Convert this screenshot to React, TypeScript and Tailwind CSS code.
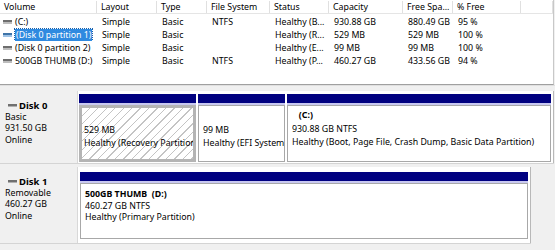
import React from "react";

const cols = [
  { name: "Volume", w: 97 },
  { name: "Layout", w: 60 },
  { name: "Type", w: 50 },
  { name: "File System", w: 63 },
  { name: "Status", w: 59 },
  { name: "Capacity", w: 74 },
  { name: "Free Spa...", w: 50 },
  { name: "% Free", w: 68 },
  { name: "", w: 32 },
];

const rows = [
  ["(C:)", "Simple", "Basic", "NTFS", "Healthy (B...", "930.88 GB", "880.49 GB", "95 %"],
  ["(Disk 0 partition 1)", "Simple", "Basic", "", "Healthy (R...", "529 MB", "529 MB", "100 %"],
  ["(Disk 0 partition 2)", "Simple", "Basic", "", "Healthy (E...", "99 MB", "99 MB", "100 %"],
  ["500GB THUMB (D:)", "Simple", "Basic", "NTFS", "Healthy (P...", "460.27 GB", "433.56 GB", "94 %"],
];

function DriveIcon({ selected }: { selected?: boolean }) {
  return (
    <span className="inline-flex flex-col w-[9px] h-[4px] mr-[3px] shrink-0">
      <span className={"block h-[2px] " + (selected ? "bg-[#3f74a8]" : "bg-[#6e6e6e]")} />
      <span className={"block h-[2px] " + (selected ? "bg-[#9fc3e6]" : "bg-[#bdbdbd]")} />
    </span>
  );
}

function Partition({
  w,
  hatched,
  lines,
  bold,
  body,
  boldLead,
}: {
  w: string;
  hatched?: boolean;
  lines: string[];
  bold?: string;
  body: string;
  boldLead: string;
}) {
  return (
    <div className={"flex flex-col min-w-0 " + w}>
      <div className="h-[9px] bg-[#000080] shrink-0" />
      <div className="h-[2px] bg-[#c8c8f0] shrink-0" />
      <div
        className={
          "flex-1 flex flex-col overflow-hidden " +
          body +
          " " +
          (hatched
            ? "border-[3px] border-[#b4b4b4] pl-[2px] bg-[repeating-linear-gradient(135deg,#ffffff_0px,#ffffff_5px,#c4c4c4_5px,#c4c4c4_6px)]"
            : "border border-[#a8a8a8] pl-[4px] bg-white")
        }
      >
        <div className={"font-bold whitespace-pre " + boldLead}>{bold ?? " "}</div>
        {lines.map((l, i) => (
          <div key={i} className="whitespace-nowrap overflow-hidden">
            {l}
          </div>
        ))}
      </div>
    </div>
  );
}

function DiskLabel({ name, lines, pt }: { name: string; lines: string[]; pt: string }) {
  return (
    <div className={"w-[78px] shrink-0 bg-[#f0f0f0] border-r border-[#d8d8d8] pl-[5px] leading-[11.7px] " + pt}>
      <div className="flex items-center font-bold text-[9.5px]">
        <span className="inline-flex flex-col w-[9px] h-[3px] mr-[2px] ml-[3px]">
          <span className="block h-[2px] bg-[#707070]" />
          <span className="block h-[1px] bg-[#b0b0b0]" />
        </span>
        {name}
      </div>
      {lines.map((l, i) => (
        <div key={i}>{l}</div>
      ))}
    </div>
  );
}

export default function App() {
  return (
    <div
      className="w-[555px] h-[250px] overflow-hidden bg-[#f0f0f0] text-black text-[8.8px] flex flex-col"
      style={{ fontFamily: "'Noto Sans', 'Open Sans', sans-serif" }}
    >
      {/* Volume list */}
      <div className="h-[85px] shrink-0 bg-white border-b border-[#a0a0a0] border-r border-r-[#c8c8c8] w-[554px]">
        <div className="flex h-[14px] border-b border-[#e5e5e5] leading-[13px] pt-[1px]">
          {cols.map((c, i) => (
            <div
              key={i}
              style={{ width: c.w }}
              className="shrink-0 border-r border-[#e0e0e0] pl-[4px] whitespace-nowrap overflow-hidden"
            >
              {c.name}
            </div>
          ))}
        </div>
        <div className="pt-[1px]">
          {rows.map((r, ri) => (
            <div key={ri} className="flex h-[13px] leading-[12px]">
              {r.map((cell, ci) => (
                <div
                  key={ci}
                  style={{ width: cols[ci].w }}
                  className={
                    "shrink-0 whitespace-nowrap overflow-hidden " +
                    (ci === 0 ? "pl-[3px] flex items-center" : "pl-[5px] pt-[1px]")
                  }
                >
                  {ci === 0 ? (
                    <>
                      <DriveIcon selected={ri === 1} />
                      <span
                        className={
                          ri === 1
                            ? "bg-[#2f8ae0] text-white px-[1px] outline outline-1 outline-dotted outline-[#1a5fa8]"
                            : ""
                        }
                      >
                        {cell}
                      </span>
                    </>
                  ) : (
                    cell
                  )}
                </div>
              ))}
            </div>
          ))}
        </div>
      </div>

      {/* Graphical view */}
      <div className="flex-1 pt-[5px] flex flex-col gap-[3px] border-t border-[#e0e0e0]">
        {/* Disk 0 */}
        <div className="flex h-[73px] border-b border-[#d4d4d4] w-[554px]">
          <DiskLabel name="Disk 0" lines={["Basic", "931.50 GB", "Online"]} pt="pt-[9px]" />
          <div className="flex-1 flex gap-[2px] bg-white pl-[1px] pr-[2px] pt-[3px] pb-[1px] border-r border-[#b8b8b8]">
            <Partition
              w="w-[117px]"
              hatched
              boldLead=""
              body="leading-[13.5px] pt-[2px]"
              lines={["529 MB", "Healthy (Recovery Partition)"]}
            />
            <Partition
              w="w-[87px]"
              boldLead=""
              body="leading-[13.5px] pt-[4px]"
              lines={["99 MB", "Healthy (EFI System Partition)"]}
            />
            <Partition
              w="flex-1"
              boldLead=""
              body="leading-[13.5px] pt-[3px]"
              bold="   (C:)"
              lines={["930.88 GB NTFS", "Healthy (Boot, Page File, Crash Dump, Basic Data Partition)"]}
            />
          </div>
        </div>
        {/* Disk 1 */}
        <div className="flex h-[77px] w-[531px] border-b border-[#d4d4d4]">
          <DiskLabel name="Disk 1" lines={["Removable", "460.27 GB", "Online"]} pt="pt-[9px]" />
          <div className="flex-1 flex bg-white pl-[2px] pr-[2px] pt-[5px] pb-[4px] border-r border-[#b8b8b8]">
            <Partition
              w="flex-1"
              boldLead="leading-[12.5px]"
              body="leading-[11px] pt-[4px]"
              bold="500GB THUMB  (D:)"
              lines={["460.27 GB NTFS", "Healthy (Primary Partition)"]}
            />
          </div>
        </div>
      </div>
    </div>
  );
}
